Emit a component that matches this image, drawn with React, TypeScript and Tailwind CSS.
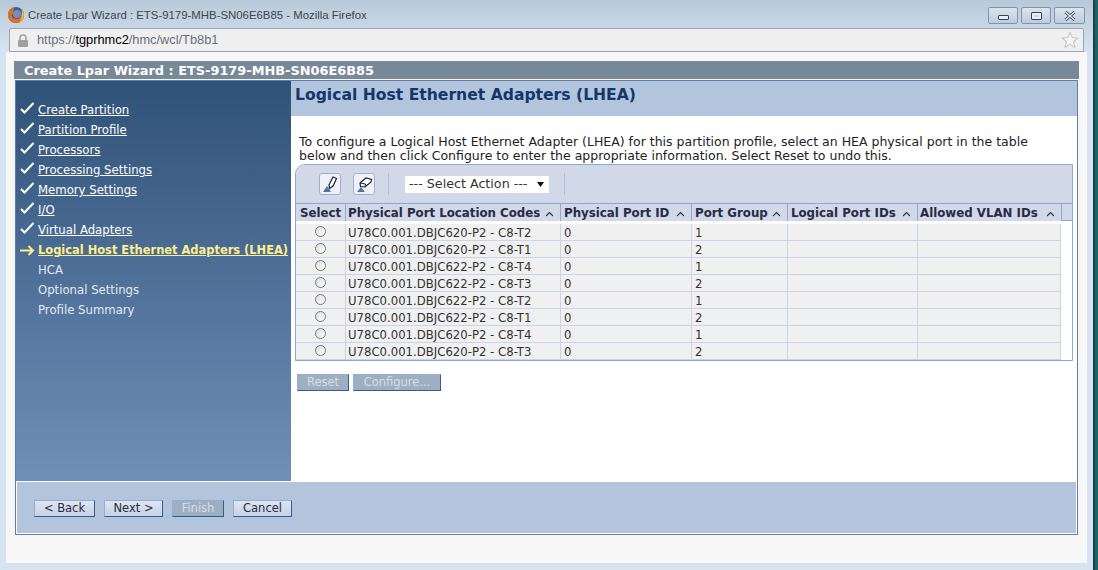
import React from "react";

const done = ["Create Partition","Partition Profile","Processors","Processing Settings","Memory Settings","I/O","Virtual Adapters"];
const later = ["HCA","Optional Settings","Profile Summary"];
const heads = ["Select","Physical Port Location Codes","Physical Port ID","Port Group","Logical Port IDs","Allowed VLAN IDs"];
const rows = [
  ["U78C0.001.DBJC620-P2 - C8-T2","1"],
  ["U78C0.001.DBJC620-P2 - C8-T1","2"],
  ["U78C0.001.DBJC622-P2 - C8-T4","1"],
  ["U78C0.001.DBJC622-P2 - C8-T3","2"],
  ["U78C0.001.DBJC622-P2 - C8-T2","1"],
  ["U78C0.001.DBJC622-P2 - C8-T1","2"],
  ["U78C0.001.DBJC620-P2 - C8-T4","1"],
  ["U78C0.001.DBJC620-P2 - C8-T3","2"],
];

function Check() {
  return (
    <svg width="15" height="13" viewBox="0 0 15 13" className="shrink-0 mb-[5px]">
      <path d="M1 7 L4.5 10.5 L13.5 1" fill="none" stroke="#fff" strokeWidth="2" />
    </svg>
  );
}
function Arrow() {
  return (
    <svg width="15" height="13" viewBox="0 0 15 13" className="shrink-0 mb-[1px]">
      <path d="M0 6.5 H13 M8.5 2 L13 6.5 L8.5 11" fill="none" stroke="#ffee8e" strokeWidth="2" />
    </svg>
  );
}
function Sort() {
  return (
    <svg width="9" height="6" viewBox="0 0 9 6" className="shrink-0">
      <path d="M1 5 L4.5 1.5 L8 5" fill="none" stroke="#333" strokeWidth="1.1" />
    </svg>
  );
}
function WinBtn({ children, w }: { children: React.ReactNode; w: string }) {
  return (
    <div className={`${w} h-[17px] flex items-center justify-center rounded-[2px] border border-[#8493a8] bg-gradient-to-b from-[#d9e4f0] to-[#bccde0]`}>
      {children}
    </div>
  );
}
function WizBtn({ label, w, off }: { label: string; w: string; off?: boolean }) {
  return (
    <div
      className={`${w} h-[17px] flex items-center justify-center text-[11.5px] leading-none border border-t-[#8fb0d4] border-l-[#8fb0d4] border-r-[#2f5f92] border-b-[#2f5f92] ${
        off ? "bg-[#9fafc2] text-[#d5dde6]" : "bg-gradient-to-b from-[#dfe6f2] to-[#c6d1e4] text-[#2a2a3c]"
      }`}
    >
      {label}
    </div>
  );
}

export default function App() {
  return (
    <div className="w-[1098px] h-[570px] flex overflow-hidden bg-[#d6e4f1] text-[11.7px]" style={{ fontFamily: '"DejaVu Sans", sans-serif' }}>
      <div className="w-[1093px] h-full flex flex-col bg-gradient-to-b from-[#b7c9d8] via-[#d6e4f1] via-[9%] to-[#d6e4f1]">
        {/* title bar */}
        <div className="h-[28px] flex shrink-0 relative">
          <div className="ml-[7px] mt-[6px] w-[18px] h-[18px]">
            <svg width="18" height="18" viewBox="0 0 18 18">
              <circle cx="9" cy="9" r="8" fill="#3a5f9c" />
              <circle cx="10" cy="8" r="4" fill="#6f8fc4" />
              <path d="M7 1.2 C4 2 1 5 1 9 C1 13.5 4.5 17 9 17 C13.5 17 17 13.5 17 9 C17 6.5 16 4.5 14.5 3 C15 5 15 6.5 14.5 8 C14.5 11 12 13 9.5 13 C7 13 5 11.5 4.5 9.5 C5 8 6 7.5 7.5 7.5 C7.5 6.5 6.5 6 6 5.5 C6.5 4 7.5 3 7 1.2Z" fill="#e0701e" />
              <path d="M14.5 3 C16 4.5 17 6.5 17 9 C17 12 15 15 12 16.3 C14.5 13.5 15.5 8 14.5 3Z" fill="#f5b02e" />
            </svg>
          </div>
          <span className="ml-[3px] mt-[9px] leading-[13px] text-[#3d4650] text-[11.4px]" style={{ fontFamily: '"Liberation Sans", sans-serif' }}>
            Create Lpar Wizard : ETS-9179-MHB-SN06E6B85 - Mozilla Firefox
          </span>
          <div className="ml-auto mr-[8px] mt-[7px] flex gap-[3px]">
            <WinBtn w="w-[30px]">
              <div className="w-[11px] h-[5px] mt-[3px] bg-[#e8eef5] border border-[#3a4450] rounded-[1px]" />
            </WinBtn>
            <WinBtn w="w-[30px]">
              <div className="w-[11px] h-[8px] bg-[#e8eef5] border-[1.5px] border-[#3a4450] rounded-[1px] flex items-center justify-center">
                <div className="w-[5px] h-[2px] bg-[#cfd8e2]" />
              </div>
            </WinBtn>
            <WinBtn w="w-[31px]">
              <svg width="12" height="10" viewBox="0 0 12 10">
                <path d="M1.5 1 L10.5 9 M10.5 1 L1.5 9" stroke="#3a4450" strokeWidth="3" />
                <path d="M1.5 1 L10.5 9 M10.5 1 L1.5 9" stroke="#f0f4f8" strokeWidth="1.2" />
              </svg>
            </WinBtn>
          </div>
        </div>
        {/* address bar */}
        <div className="h-[24px] ml-[9px] mr-[9px] shrink-0 flex items-center rounded-t-[2px] border border-[#9aa5b1] bg-[#efefef]" style={{ fontFamily: '"Liberation Sans", sans-serif' }}>
          <svg width="12" height="13" viewBox="0 0 12 13" className="ml-[7px]">
            <path d="M3 6 V4 A3 3 0 0 1 9 4 V6" fill="none" stroke="#a0a0a0" strokeWidth="1.6" />
            <rect x="1" y="6" width="10" height="7" rx="1" fill="#a0a0a0" />
          </svg>
          <span className="ml-[8px] text-[12.8px] text-[#6a7078]">
            https://<span className="text-[#000]">tgprhmc2</span>/hmc/wcl/Tb8b1
          </span>
          <svg width="18" height="18" viewBox="0 0 18 18" className="ml-auto mr-[4px]">
            <path d="M9 1.5 L11.2 6.6 L16.8 7.1 L12.6 10.8 L13.9 16.3 L9 13.4 L4.1 16.3 L5.4 10.8 L1.2 7.1 L6.8 6.6 Z" fill="#f7f7f7" stroke="#c4c4c4" strokeWidth="1.1" />
          </svg>
        </div>
        {/* page */}
        <div className="ml-[6px] mr-[6px] mb-[7px] flex-1 min-h-0 bg-[#f7f7f7] pt-[9px] px-[8px] flex flex-col">
          <div className="h-[18px] shrink-0 bg-[#778899] text-white font-bold text-[12.9px] leading-[19px] pl-[10px] whitespace-nowrap">
            Create Lpar Wizard : ETS-9179-MHB-SN06E6B85
          </div>
          <div className="mt-px ml-px mr-px h-[455px] shrink-0 border border-[#5f7fa8] flex flex-col bg-white">
            <div className="h-[400px] flex shrink-0">
              {/* sidebar */}
              <div className="w-[275px] shrink-0 bg-gradient-to-b from-[#2f5279] to-[#7090b8] pt-[20px] pl-[4px] text-white">
                {done.map((t) => (
                  <div key={t} className="h-[20px] flex items-center">
                    <Check />
                    <span className="ml-[3px] underline whitespace-nowrap">{t}</span>
                  </div>
                ))}
                <div className="h-[20px] flex items-center">
                  <Arrow />
                  <span className="ml-[3px] underline font-bold text-[#ffee8e] whitespace-nowrap text-[11.45px]">Logical Host Ethernet Adapters (LHEA)</span>
                </div>
                {later.map((t) => (
                  <div key={t} className="h-[20px] pl-[18px] flex items-center text-[#e4eaf2]">{t}</div>
                ))}
              </div>
              {/* main */}
              <div className="flex-1 min-w-0 flex flex-col">
                <div className="h-[35px] shrink-0 bg-[#b3c4dd] pl-[4px] pt-[3px] text-[#12386b] font-bold text-[15.6px] leading-[22px] whitespace-nowrap">
                  Logical Host Ethernet Adapters (LHEA)
                </div>
                <p className="mt-[19px] ml-[8px] text-[#222] text-[12.5px] leading-[14px] whitespace-nowrap">
                  To configure a Logical Host Ethernet Adapter (LHEA) for this partition profile, select an HEA physical port in the table
                  <br />
                  below and then click Configure to enter the appropriate information. Select Reset to undo this.
                </p>
                <div className="ml-[4px] mt-[1px] w-[778px] h-[197px] shrink-0 border border-[#8ea8d4] rounded-tl-[10px] flex flex-col overflow-hidden">
                  <div className="h-[38px] shrink-0 bg-[#d1d8e8] flex items-center">
                    <div className="ml-[23px] w-[22px] h-[22px] rounded-[3px] border border-[#9fb0cc] bg-[#eef2f8] flex items-center justify-center">
                      <svg width="17" height="18" viewBox="0 0 17 18">
                        <path d="M7 10 L11 2 L14.5 3.5 L11 11 L7.5 13.5 Z" fill="#fff" stroke="#1c2436" strokeWidth="1.2" />
                        <path d="M1 17 L5 11 L9 17 Z" fill="#4f76a6" />
                      </svg>
                    </div>
                    <div className="ml-[12px] w-[22px] h-[22px] rounded-[3px] border border-[#9fb0cc] bg-[#eef2f8] flex items-center justify-center">
                      <svg width="17" height="18" viewBox="0 0 17 18">
                        <path d="M4 8 L10 3 L15.5 4.5 L15 7 L9 12 L4.5 11.5 Z" fill="#fff" stroke="#1c2436" strokeWidth="1.2" />
                        <path d="M4 8 L9.5 9 L9 12" fill="none" stroke="#1c2436" strokeWidth="1" />
                        <path d="M1 17 L5 12 L9 17 Z" fill="#4f76a6" />
                      </svg>
                    </div>
                    <div className="ml-[13px] w-px h-[22px] bg-[#b6c2d8]" />
                    <div className="ml-[16px] w-[144px] h-[17px] bg-white rounded-[1px] flex items-center pl-[4px] text-[#333] text-[12.7px] whitespace-nowrap">
                      --- Select Action ---
                      <svg width="9" height="5" viewBox="0 0 9 5" className="ml-auto mr-[4px]">
                        <path d="M1 0 H8 L4.5 5 Z" fill="#111" />
                      </svg>
                    </div>
                    <div className="ml-[15px] w-px h-[22px] bg-[#b6c2d8]" />
                  </div>
                  <div className="h-[18px] shrink-0 flex bg-[#8ea8d4]">
                    <div className="h-full flex-1 grid grid-cols-[49px_215px_131px_96px_130px_144px] border-y border-[#8ea8d4]">
                      {heads.map((h, i) => (
                        <div key={h} className={`bg-[#d1d8e8] flex items-center pt-px text-[#2a2a44] font-bold text-[11.8px] whitespace-nowrap ${i === 0 ? "justify-center" : `${i === 1 || i === 5 ? "pl-[2px]" : "pl-[3px]"} pr-[6px] justify-between border-l border-[#8ea8d4]`}`}>
                          {h}
                          {i > 0 && <Sort />}
                        </div>
                      ))}
                    </div>
                    <div className="w-[11px] h-full bg-[#d1d8e8] border-y border-l border-[#8ea8d4]" />
                  </div>
                  <div className="flex-1 min-h-0 bg-white pt-[3px]">
                    {rows.map((r, i) => (
                      <div key={i} className="h-[17px] w-[765px] grid grid-cols-[49px_215px_131px_96px_130px_144px] border-b border-[#c8d4ea] text-[#333]">
                        <div className="bg-[#f0f0f0] flex items-start justify-center pt-[2px]">
                          <div className="w-[11px] h-[11px] rounded-full border border-[#777] bg-gradient-to-br from-[#dcdcdc] to-white" />
                        </div>
                        <div className="bg-[#f0f0f0] border-l border-[#c8d4ea] pl-[2px] leading-[14px] pt-[2px] whitespace-nowrap">{r[0]}</div>
                        <div className="bg-[#f0f0f0] border-l border-[#c8d4ea] pl-[3px] leading-[14px] pt-[2px]">0</div>
                        <div className="bg-[#f0f0f0] border-l border-[#c8d4ea] pl-[3px] leading-[14px] pt-[2px]">{r[1]}</div>
                        <div className="bg-[#f0f0f0] border-l border-[#c8d4ea]" />
                        <div className="bg-[#f0f0f0] border-x border-[#c8d4ea]" />
                      </div>
                    ))}
                  </div>
                </div>
                <div className="ml-[6px] mt-[13px] flex gap-[4px]">
                  <WizBtn label="Reset" w="w-[52px]" off />
                  <WizBtn label="Configure..." w="w-[88px]" off />
                </div>
              </div>
            </div>
            <div className="flex-1 min-h-0 mt-px mr-px ml-px mb-px bg-[#b3c4dd] flex items-start pt-[18px] pl-[17px] gap-[9px]">
              <WizBtn label="< Back" w="w-[61px]" />
              <WizBtn label="Next >" w="w-[59px]" />
              <WizBtn label="Finish" w="w-[52px]" off />
              <WizBtn label="Cancel" w="w-[59px]" />
            </div>
          </div>
        </div>
      </div>
      <div className="w-[2px] h-full bg-[#2a3a44]" />
      <div className="w-[3px] h-full bg-[#11696b]" />
    </div>
  );
}
